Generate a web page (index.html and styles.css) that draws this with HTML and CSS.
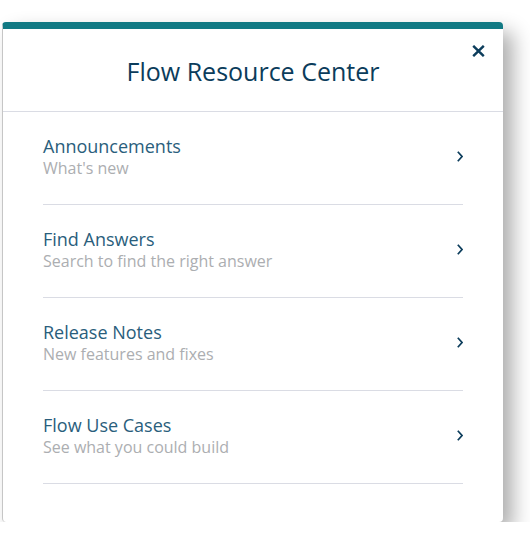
FILE: index.html
```html
<!DOCTYPE html>
<html lang="en">
<head>
<meta charset="utf-8">
<title>Flow Resource Center</title>
<link rel="stylesheet" href="styles.css">
</head>
<body>
<div class="card">
  <div class="header">
    <h1 class="title">Flow Resource Center</h1>
    <button class="close" aria-label="Close">
      <svg width="13" height="12" viewBox="0 0 13 12"><path d="M1.2 0.8 L11.8 11.2 M11.8 0.8 L1.2 11.2" stroke="#0c3d5c" stroke-width="2.4" fill="none"/></svg>
    </button>
  </div>
  <ul class="list">
    <li class="item">
      <div class="text"><div class="item-title">Announcements</div><div class="item-sub">What's new</div></div>
      <svg class="chev" width="6" height="11" viewBox="0 0 6 11"><polyline points="0.8,0.8 5,5.5 0.8,10.2" stroke="#0c3d5c" stroke-width="1.7" fill="none"/></svg>
    </li>
    <li class="item">
      <div class="text"><div class="item-title">Find Answers</div><div class="item-sub">Search to find the right answer</div></div>
      <svg class="chev" width="6" height="11" viewBox="0 0 6 11"><polyline points="0.8,0.8 5,5.5 0.8,10.2" stroke="#0c3d5c" stroke-width="1.7" fill="none"/></svg>
    </li>
    <li class="item">
      <div class="text"><div class="item-title">Release Notes</div><div class="item-sub">New features and fixes</div></div>
      <svg class="chev" width="6" height="11" viewBox="0 0 6 11"><polyline points="0.8,0.8 5,5.5 0.8,10.2" stroke="#0c3d5c" stroke-width="1.7" fill="none"/></svg>
    </li>
    <li class="item">
      <div class="text"><div class="item-title">Flow Use Cases</div><div class="item-sub">See what you could build</div></div>
      <svg class="chev" width="6" height="11" viewBox="0 0 6 11"><polyline points="0.8,0.8 5,5.5 0.8,10.2" stroke="#0c3d5c" stroke-width="1.7" fill="none"/></svg>
    </li>
  </ul>
</div>
</body>
</html>
```
FILE: styles.css
```css
html, body {
  margin: 0;
  padding: 0;
  background: #ffffff;
}
body {
  font-family: "Open Sans", "DejaVu Sans", sans-serif;
}
.card {
  position: relative;
  margin: 22px 0 0 2px;
  width: 500px;
  height: 493px;
  background: #ffffff;
  border-top: 7px solid #127a84;
  border-left: 1px solid #c6c6c6;
  border-radius: 4px;
  box-shadow: 10px 10px 20px rgba(0, 0, 0, 0.32);
}
.header {
  padding: 26px 0 24px;
  border-bottom: 1px solid #dadce4;
  text-align: center;
}
.title {
  margin: 0;
  font-size: 25px;
  line-height: 32px;
  font-weight: 500;
  color: #0b3c5b;
}
.close {
  position: absolute;
  top: 16px;
  right: 18px;
  width: 13px;
  height: 12px;
  padding: 0;
  border: 0;
  background: none;
  display: block;
}
.close svg { display: block; }
.list {
  list-style: none;
  margin: 0 40px 0 40px;
  padding: 0;
}
.item {
  display: flex;
  align-items: center;
  justify-content: space-between;
  padding: 22px 0 25px;
  border-bottom: 1px solid #dadce4;
}
.item-title {
  font-size: 18px;
  line-height: 24px;
  color: #2a5e7c;
}
.item-sub {
  font-size: 16px;
  line-height: 21px;
  color: #acaeb1;
}
.chev {
  display: block;
  margin-bottom: 0;
}
```
